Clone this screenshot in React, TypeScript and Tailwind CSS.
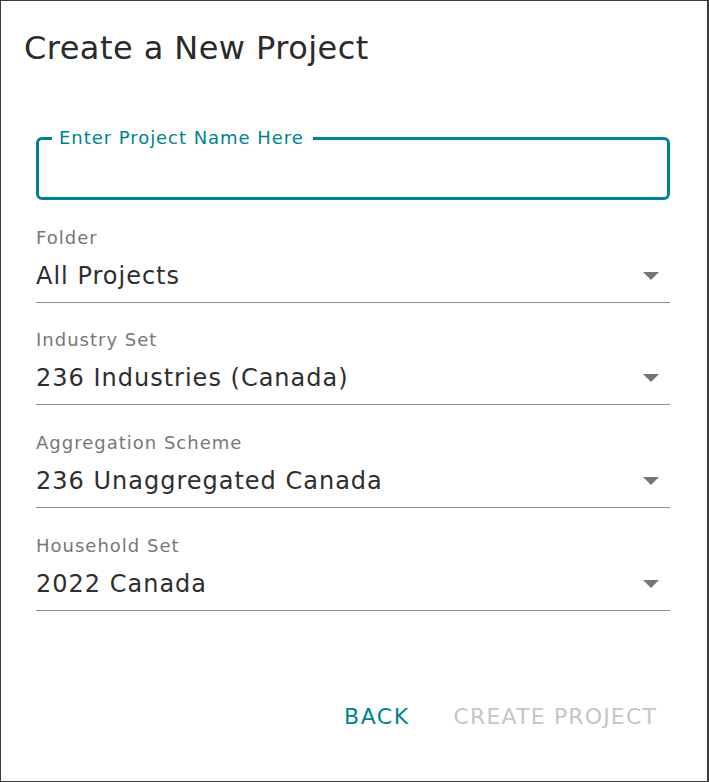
import React from "react";

const fields = [
  { label: "Folder", value: "All Projects", mt: "mt-[26px]" },
  { label: "Industry Set", value: "236 Industries (Canada)", mt: "mt-[25px]" },
  { label: "Aggregation Scheme", value: "236 Unaggregated Canada", mt: "mt-[26px]" },
  { label: "Household Set", value: "2022 Canada", mt: "mt-[26px]" },
];

function Arrow() {
  return (
    <svg width="16" height="8" viewBox="0 0 16 8" className="shrink-0">
      <path d="M0 0 L16 0 L8 8 Z" fill="#757575" />
    </svg>
  );
}

export default function App() {
  return (
    <div
      className="w-[709px] h-[782px] bg-white border-t border-l border-b border-r-2 border-[#3c3c3c] flex flex-col"
      style={{ fontFamily: '"DejaVu Sans", "Noto Sans", sans-serif' }}
    >
      <h2 className="pl-[23px] pt-[27px] text-[32px] leading-[40px] tracking-[0.45px] text-[#2b2b2b] font-normal">
        Create a New Project
      </h2>

      <div className="pl-[35px] pr-[37px]">
        <div className="relative mt-[69px] h-[63px] border-[3px] border-[#00838f] rounded-[6px]">
          <span className="absolute left-[13px] -top-[12px] bg-white pl-[7px] pr-[9px] text-[18px] leading-[20px] tracking-[0.95px] text-[#00838f]">
            Enter Project Name Here
          </span>
        </div>

        {fields.map((f) => (
          <div key={f.label} className={f.mt + " border-b border-[#8f8f8f] pb-[10px]"}>
            <div className="h-[24px] leading-[24px] text-[18px] tracking-[1px] text-[#777777]">
              {f.label}
            </div>
            <div className="mt-[10px] h-[32px] flex items-center justify-between pr-[11px]">
              <span className="text-[24px] leading-[32px] tracking-[1px] text-[#2e2e2e]">
                {f.value}
              </span>
              <Arrow />
            </div>
          </div>
        ))}
      </div>

      <div className="mt-auto pb-[46px] pr-[50px] flex justify-end items-center gap-[44px]">
        <button className="text-[22px] leading-[36px] tracking-[1.5px] text-[#00838f]">BACK</button>
        <button className="text-[22px] leading-[36px] tracking-[1.15px] text-[#c6c6c6]">
          CREATE PROJECT
        </button>
      </div>
    </div>
  );
}
